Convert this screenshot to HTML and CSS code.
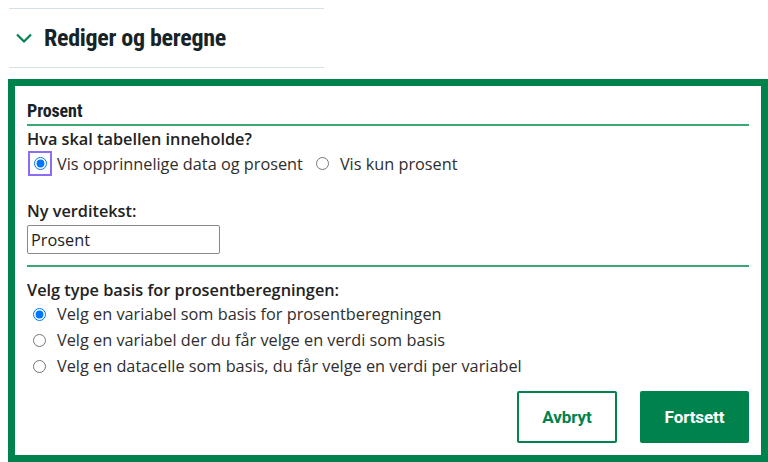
FILE: index.html
```html
<!DOCTYPE html>
<html lang="no">
<head>
<meta charset="utf-8">
<link rel="stylesheet" href="styles.css">
</head>
<body>
<div class="accordion">
  <div class="acc-head">
    <svg class="chev" width="18" height="12" viewBox="0 0 18 12"><path d="M2 2.5 L9 9.5 L16 2.5" fill="none" stroke="#00824d" stroke-width="2.2"/></svg>
    <span class="acc-title">Rediger og beregne</span>
  </div>
</div>
<div class="frame">
  <div class="section-title">Prosent</div>
  <div class="label first">Hva skal tabellen inneholde?</div>
  <div class="radio-row">
    <label class="radio"><span class="focus"><input type="radio" name="a" checked></span>Vis opprinnelige data og prosent</label>
    <label class="radio"><input type="radio" name="a">Vis kun prosent</label>
  </div>
  <div class="label spaced">Ny verditekst:</div>
  <input class="text-input" type="text" value="Prosent">
  <div class="divider"></div>
  <div class="label basis">Velg type basis for prosentberegningen:</div>
  <div class="radio-list">
    <label class="radio"><input type="radio" name="b" checked>Velg en variabel som basis for prosentberegningen</label>
    <label class="radio"><input type="radio" name="b">Velg en variabel der du får velge en verdi som basis</label>
    <label class="radio"><input type="radio" name="b">Velg en datacelle som basis, du får velge en verdi per variabel</label>
  </div>
  <div class="actions">
    <button class="btn btn-secondary">Avbryt</button>
    <button class="btn btn-primary">Fortsett</button>
  </div>
</div>
</body>
</html>
```
FILE: styles.css
```css
* { box-sizing: border-box; }
body {
  margin: 0;
  background: #fff;
  font-family: "Open Sans", sans-serif;
  color: #222;
}
.accordion {
  margin: 8px 0 0 9px;
  width: 315px;
  border-top: 1px solid #d2e3e5;
  border-bottom: 1px solid #d2e3e5;
  height: 60px;
}
.acc-head {
  display: flex;
  align-items: center;
  height: 58px;
  padding-left: 6px;
  gap: 11px;
}
.acc-title {
  font-family: Roboto, sans-serif;
  font-weight: 700;
  font-size: 24px;
  font-stretch: 85%;
  letter-spacing: -0.3px;
  color: #162327;
}
.frame {
  margin: 11px 0 0 8px;
  border: 7px solid #00824d;
  height: 383px;
  padding: 15px 12px 12px 12px;
  display: flex;
  flex-direction: column;
}
.section-title {
  font-family: Roboto, sans-serif;
  font-weight: 700;
  font-size: 18px;
  font-stretch: 87%;
  line-height: 20px;
  letter-spacing: -0.1px;
  color: #162327;
  padding-bottom: 3px;
  border-bottom: 2px solid #3aa874;
}
.label {
  font-weight: 600;
  font-size: 16.3px;
  line-height: 22px;
  color: #222;
}
.label.first { margin-top: 2px; }
.label.spaced { margin-top: 23px; }
.label.basis { margin-top: 13px; line-height: 21px; }
.radio-row {
  display: flex;
  align-items: center;
  height: 27px;
}
.radio {
  display: flex;
  align-items: center;
  font-size: 16.3px;
  line-height: 20px;
  color: #2e2e2e;
}
.radio-row .radio + .radio { margin-left: 13px; }
.radio input {
  width: 13px;
  height: 13px;
  margin: 0 11px 0 6px;
}
.radio-row .radio + .radio input { margin-left: 0; }
.focus {
  display: inline-flex;
  align-items: center;
  justify-content: center;
  width: 24px;
  height: 25px;
  border: 2px solid #8a6cf5;
  margin-right: 5px;
  margin-left: 1px;
}
.focus input { margin: 0; }
.text-input {
  margin-top: 3px;
  width: 193px;
  height: 29px;
  border: 1px solid #8a8a8a;
  border-radius: 2px;
  font-family: "Open Sans", sans-serif;
  font-size: 16.3px;
  padding: 0 3px;
  color: #222;
}
.divider {
  margin-top: 11px;
  border-top: 2px solid #3aa874;
}
.radio-list {
  display: flex;
  flex-direction: column;
}
.radio-list .radio { height: 26px; }
.actions {
  margin-top: auto;
  display: flex;
  justify-content: flex-end;
  gap: 23px;
}
.btn {
  height: 52px;
  font-family: Roboto, sans-serif;
  font-weight: 700;
  font-size: 17px;
  font-stretch: 88%;
  letter-spacing: -0.1px;
  border-radius: 2px;
}
.btn-secondary {
  width: 100px;
  background: #fff;
  border: 2px solid #00824d;
  color: #00824d;
}
.btn-primary {
  width: 109px;
  background: #00824d;
  border: 2px solid #00824d;
  color: #fff;
}
```
